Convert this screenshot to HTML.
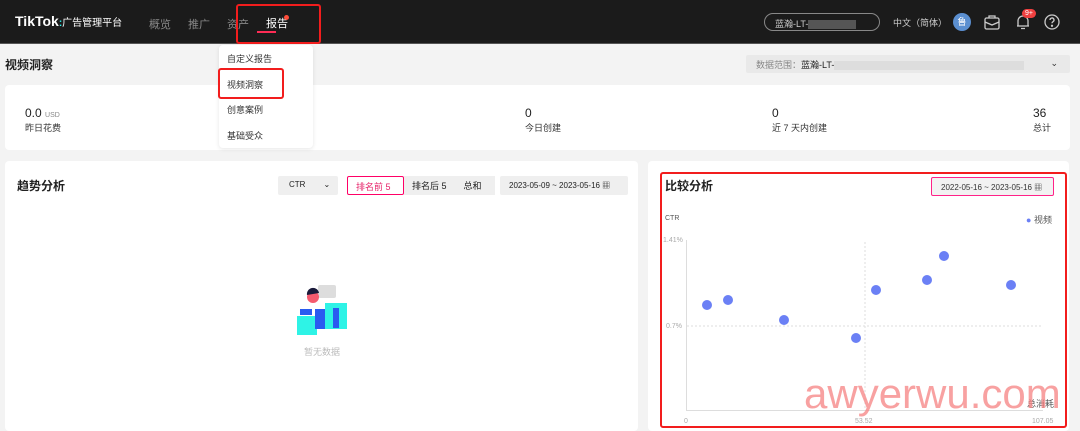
<!DOCTYPE html>
<html><head><meta charset="utf-8"><style>
*{box-sizing:border-box;margin:0;padding:0}
body{width:1080px;height:429px;overflow:hidden;background:#f3f3f3;font-family:"Liberation Sans","Noto Sans CJK SC",sans-serif;color:#222;position:relative}
.abs{position:absolute;white-space:nowrap}
.hdr{left:0;top:0;width:1080px;height:44px;background:#1b1b1b;border-bottom:1px solid #555}
.nav{color:#888;font-size:11px;top:16px}
.card{background:#fff;border-radius:4px}
.sm{font-size:9px;color:#333}
.rb{border:2.5px solid #f21d1d;border-radius:3px}
</style></head><body>
<div class="abs hdr"></div>
<div class="abs" style="left:15px;top:13px;color:#fff;font-weight:bold;font-size:14px">TikTok<span style="color:#25f4ee;font-size:10px">:</span><span style="font-weight:normal;font-size:10px">广告管理平台</span></div>
<div class="abs nav" style="left:149px">概览</div>
<div class="abs nav" style="left:188px">推广</div>
<div class="abs nav" style="left:227px">资产</div>
<div class="abs" style="left:266px;top:15px;color:#fff;font-size:11px">报告</div>
<div class="abs" style="left:284px;top:15px;width:5px;height:5px;border-radius:50%;background:#ff4d3a"></div>
<div class="abs" style="left:257px;top:31px;width:19px;height:2px;background:#fe2c55"></div>
<div class="abs rb" style="left:236px;top:4px;width:85px;height:40px"></div>
<div class="abs" style="left:764px;top:13px;width:116px;height:18px;border:1px solid #888;border-radius:9px;color:#ccc;font-size:9px;padding:3px 10px">蓝瀚-LT-<span style="display:inline-block;width:48px;height:9px;background:#555;vertical-align:middle"></span></div>
<div class="abs" style="left:893px;top:16px;color:#ccc;font-size:9px">中文（简体）</div>
<div class="abs" style="left:953px;top:13px;width:18px;height:18px;border-radius:50%;background:#5b8fd0;color:#fff;font-size:9px;text-align:center;line-height:18px">鲁</div>
<svg class="abs" style="left:983px;top:13px" width="18" height="18" viewBox="0 0 18 18" fill="none" stroke="#ccc" stroke-width="1.3"><rect x="2" y="5" width="14" height="11" rx="1.5"/><path d="M6 5V3h6v2M2 9l7 3 7-3"/></svg>
<svg class="abs" style="left:1014px;top:13px" width="18" height="18" viewBox="0 0 18 18" fill="none" stroke="#ccc" stroke-width="1.3"><path d="M4 13V8a5 5 0 0110 0v5H3h12M7 15.5h4"/></svg>
<div class="abs" style="left:1022px;top:9px;background:#f04040;color:#fff;font-size:7px;border-radius:6px;padding:1px 3px">9+</div>
<svg class="abs" style="left:1043px;top:13px" width="18" height="18" viewBox="0 0 18 18" fill="none" stroke="#ccc" stroke-width="1.3"><circle cx="9" cy="9" r="7"/><path d="M7 7a2 2 0 113 1.7c-.7.4-1 .8-1 1.6"/><circle cx="9" cy="12.8" r=".5" fill="#ccc"/></svg>

<div class="abs" style="left:5px;top:56px;font-size:12px;font-weight:bold">视频洞察</div>
<div class="abs" style="left:746px;top:55px;width:324px;height:18px;background:#e9e9e9;border-radius:2px;font-size:9px;color:#888;padding:3px 10px">数据范围：<span style="color:#222">蓝瀚-LT-</span><span style="display:inline-block;width:190px;height:9px;background:#ddd;vertical-align:middle"></span><span style="position:absolute;right:12px;color:#333">⌄</span></div>

<div class="abs card" style="left:5px;top:85px;width:1065px;height:65px"></div>
<div class="abs" style="left:25px;top:106px;font-size:12px">0.0 <span style="font-size:7px;color:#888">USD</span></div>
<div class="abs sm" style="left:25px;top:121px">昨日花费</div>
<div class="abs" style="left:525px;top:106px;font-size:12px">0</div>
<div class="abs sm" style="left:525px;top:121px">今日创建</div>
<div class="abs" style="left:772px;top:106px;font-size:12px">0</div>
<div class="abs sm" style="left:772px;top:121px">近 7 天内创建</div>
<div class="abs" style="left:1033px;top:106px;font-size:12px">36</div>
<div class="abs sm" style="left:1033px;top:121px">总计</div>

<div class="abs card" style="left:219px;top:45px;width:94px;height:103px;box-shadow:0 1px 4px rgba(0,0,0,.1)"></div>
<div class="abs sm" style="left:227px;top:52px">自定义报告</div>
<div class="abs sm" style="left:227px;top:78px">视频洞察</div>
<div class="abs sm" style="left:227px;top:103px">创意案例</div>
<div class="abs sm" style="left:227px;top:129px">基础受众</div>
<div class="abs rb" style="left:218px;top:68px;width:66px;height:31px"></div>

<div class="abs card" style="left:5px;top:161px;width:633px;height:270px"></div>
<div class="abs" style="left:17px;top:177px;font-size:12px;font-weight:bold">趋势分析</div>
<div class="abs" style="left:278px;top:176px;width:60px;height:19px;background:#efefef;border-radius:2px;font-size:8px;padding:4px 11px">CTR<span style="margin-left:18px">⌄</span></div>
<div class="abs" style="left:347px;top:176px;width:57px;height:19px;border:1px solid #f06;border-radius:2px;font-size:9px;color:#e6246a;padding:3px 8px">排名前 5</div>
<div class="abs" style="left:404px;top:176px;width:91px;height:19px;background:#efefef;font-size:9px;padding:3px 8px">排名后 5<span style="margin-left:17px">总和</span></div>
<div class="abs" style="left:500px;top:176px;width:128px;height:19px;background:#efefef;border-radius:2px;font-size:8px;padding:4px 9px">2023-05-09 ~ 2023-05-16 ▦</div>
<svg class="abs" style="left:295px;top:283px" width="55" height="55" viewBox="0 0 55 55"><rect x="23" y="2" width="18" height="13" rx="2" fill="#ddd"/><rect x="2" y="33" width="20" height="19" fill="#2ef3e6"/><rect x="20" y="26" width="14" height="20" fill="#2a5bf0"/><rect x="30" y="20" width="22" height="26" fill="#2ef3e6"/><rect x="38" y="25" width="6" height="20" fill="#2a5bf0"/><circle cx="18" cy="14" r="6" fill="#f55a6e"/><path d="M12 12a6 6 0 0112-2" fill="#1a1a3a"/><rect x="5" y="26" width="12" height="6" fill="#2a5bf0"/></svg>
<div class="abs" style="left:304px;top:345px;font-size:9px;color:#bbb">暂无数据</div>

<div class="abs card" style="left:648px;top:161px;width:421px;height:270px"></div>
<div class="abs rb" style="left:660px;top:172px;width:407px;height:256px"></div>
<div class="abs" style="left:665px;top:177px;font-size:12px;font-weight:bold">比较分析</div>
<div class="abs" style="left:931px;top:177px;width:123px;height:19px;border:1px solid #f28;background:#f2f2f2;border-radius:2px;font-size:8px;padding:4px 9px;color:#333">2022-05-16 ~ 2023-05-16 ▦</div>
<div class="abs" style="left:665px;top:215px;font-size:7px;color:#555">CTR</div>
<div class="abs" style="left:1026px;top:213px;font-size:9px;color:#555"><span style="color:#6b80f5">●</span> 视频</div>
<svg class="abs" style="left:640px;top:230px" width="440" height="199">
<text x="23" y="12" font-size="7" fill="#aaa">1.41%</text>
<text x="26" y="98" font-size="7" fill="#aaa">0.7%</text>
<text x="44" y="193" font-size="7" fill="#aaa">0</text>
<text x="215" y="193" font-size="7" fill="#aaa">53.52</text>
<text x="392" y="193" font-size="7" fill="#aaa">107.05</text>
<line x1="46.5" y1="10" x2="46.5" y2="180" stroke="#ddd"/>
<line x1="46" y1="180.5" x2="403" y2="180.5" stroke="#ddd"/>
<line x1="225" y1="12" x2="225" y2="180" stroke="#ddd" stroke-dasharray="2 2"/>
<line x1="47" y1="96" x2="402" y2="96" stroke="#ddd" stroke-dasharray="2 2"/>
<g fill="#6b80f5"><circle cx="67" cy="75" r="5"/><circle cx="88" cy="70" r="5"/><circle cx="144" cy="90" r="5"/><circle cx="216" cy="108" r="5"/><circle cx="236" cy="60" r="5"/><circle cx="287" cy="50" r="5"/><circle cx="304" cy="26" r="5"/><circle cx="371" cy="55" r="5"/></g>
</svg>
<div class="abs" style="left:1027px;top:397px;font-size:9px;color:#555">总消耗</div>
<div class="abs" style="left:804px;top:370px;font-size:42px;color:rgba(246,130,130,.75);letter-spacing:0px">awyerwu.com</div>
</body></html>
